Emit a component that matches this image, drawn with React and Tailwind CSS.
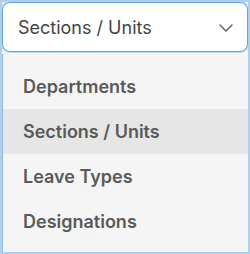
import React, { useState } from 'react';
import { ChevronDown } from 'lucide-react';

const options = ['Departments', 'Sections / Units', 'Leave Types', 'Designations'];

const App = () => {
  const [selected, setSelected] = useState('Sections / Units');

  return (
    <div className="w-[250px] h-[254px] border-2 border-[#aed0f0] bg-[#f5f5f5] flex flex-col overflow-hidden" style={{ fontFamily: 'Inter, sans-serif' }}>
      {/* Trigger */}
      <button className="h-[50px] shrink-0 flex items-center justify-between pl-[15px] pr-[9px] pt-[1px] bg-white border border-[#5fa3e6] rounded-[8px] ring-1 ring-[#bcdaf5] text-[18px] text-[#444] text-left">
        <span>{selected}</span>
        <ChevronDown className="h-6 w-6 text-[#666]" strokeWidth={1.5} />
      </button>

      {/* Menu */}
      <ul className="flex-1 mt-[2px] pt-[10px] border-l border-[#8cbcea]">
        {options.map(option => (
          <li
            key={option}
            onClick={() => setSelected(option)}
            className={`h-[45px] flex items-center pl-[20px] text-[18px] font-semibold text-[#5a5a5a] cursor-pointer ${option === selected ? 'bg-[#e6e6e6]' : ''}`}
          >
            {option}
          </li>
        ))}
      </ul>
    </div>
  );
};

export default App;
